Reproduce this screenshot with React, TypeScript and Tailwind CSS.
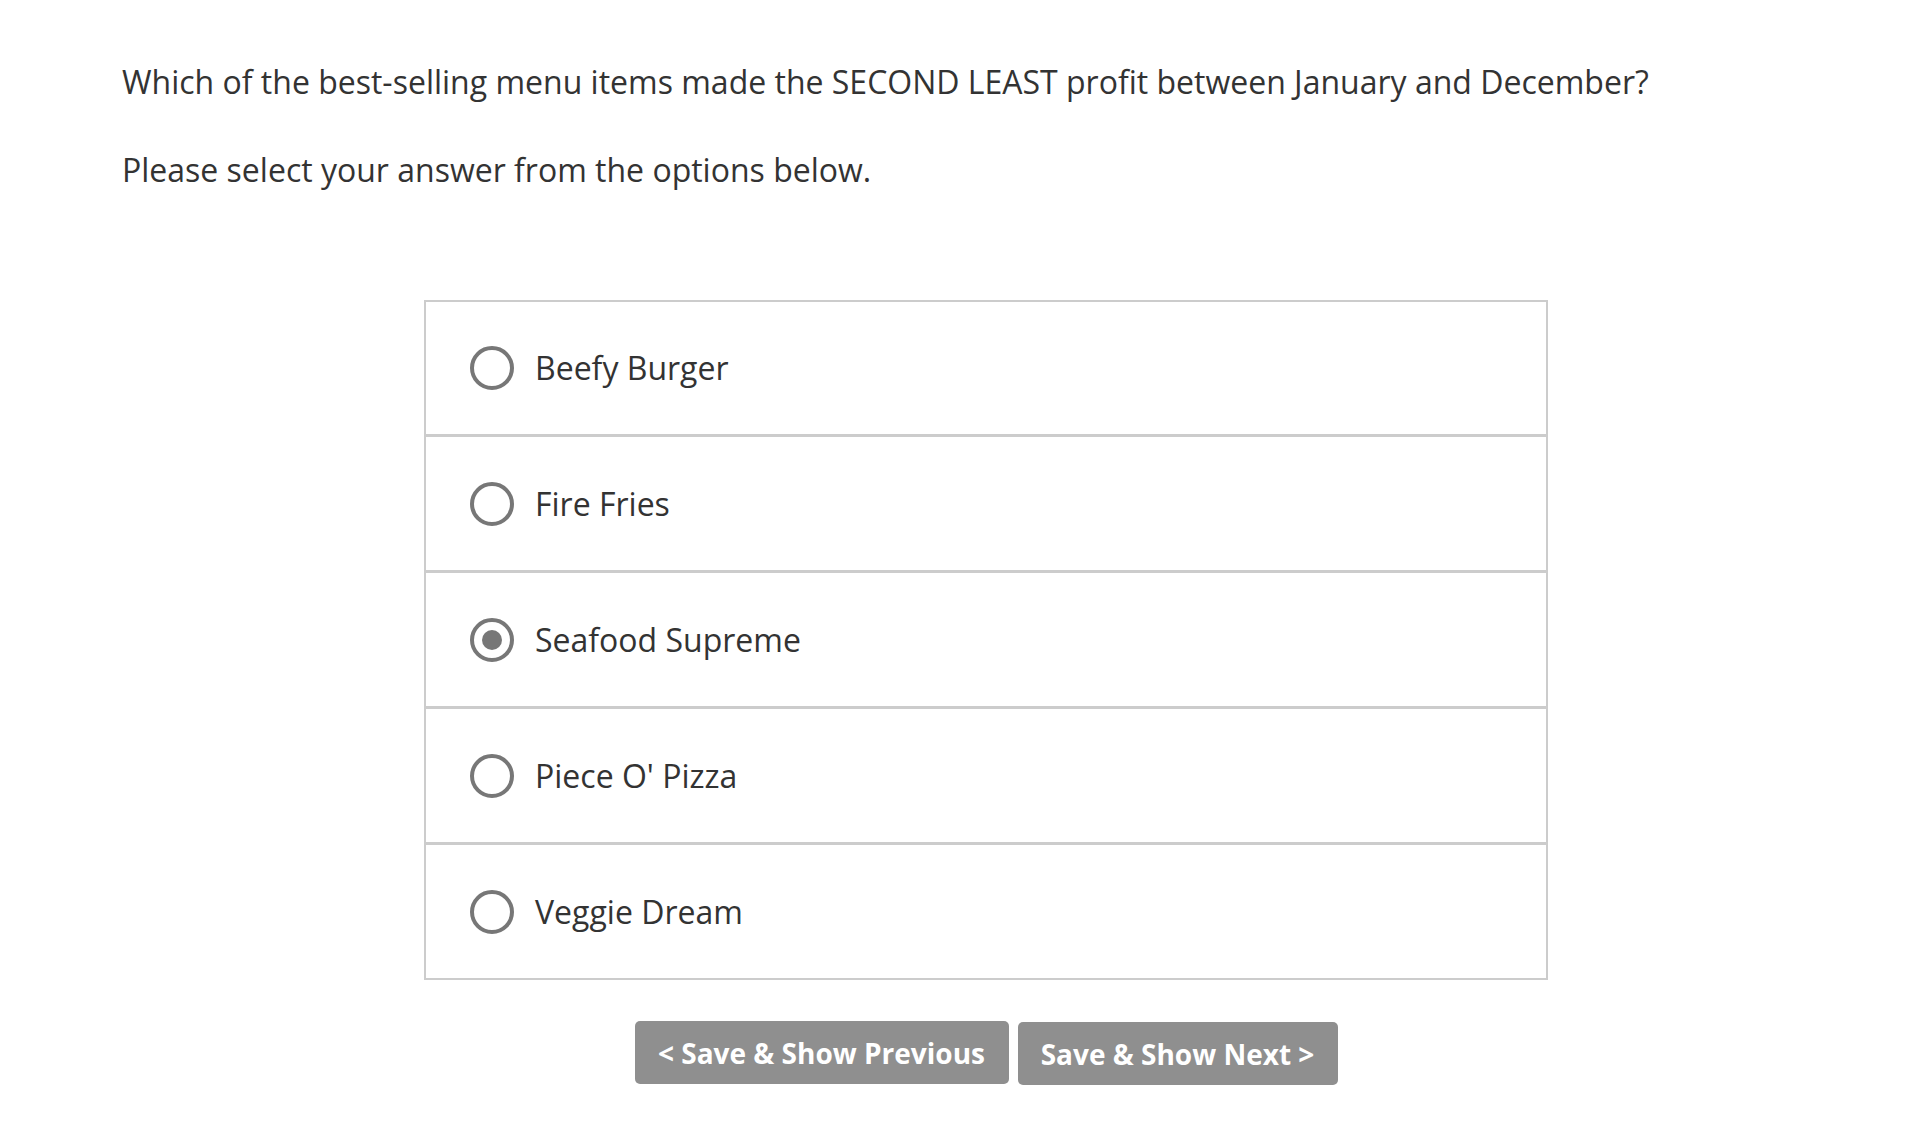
const options = [
  "Beefy Burger",
  "Fire Fries",
  "Seafood Supreme",
  "Piece O' Pizza",
  "Veggie Dream",
];

export default function App() {
  const selected = 2;

  return (
    <div
      className="min-h-[1144px] w-full bg-white pl-[122px] pr-[80px] pt-[62px] text-[#333]"
      style={{ fontFamily: '"Open Sans", "Liberation Sans", sans-serif' }}
    >
      {/* Question */}
      <p className="text-[32px] leading-[40px]">
        Which of the best-selling menu items made the SECOND LEAST profit between January and December?
      </p>
      <p className="mt-[48px] text-[32px] leading-[40px]">
        Please select your answer from the options below.
      </p>

      {/* Options */}
      <div className="mx-auto mt-[110px] w-[1124px] border-2 border-[#ccc]">
        {options.map((opt, i) => (
          <div
            key={i}
            className={`flex items-center pl-[44px] ${i > 0 ? "h-[136px] border-t-[3px] border-[#ccc]" : "h-[132px]"}`}
          >
            <span className="flex h-[44px] w-[44px] items-center justify-center rounded-full border-4 border-[#777]">
              {i === selected && <span className="h-[20px] w-[20px] rounded-full bg-[#777]" />}
            </span>
            <span className="ml-[21px] text-[32px] leading-none">{opt}</span>
          </div>
        ))}
      </div>

      {/* Buttons */}
      <div className="mt-[41px] flex items-start justify-center gap-[9px]">
        <button className="h-[63px] w-[374px] rounded-[5px] bg-[#8f8f8f] text-[28px] font-bold text-white">
          &lt; Save &amp; Show Previous
        </button>
        <button className="mt-[1px] h-[63px] w-[320px] rounded-[5px] bg-[#8f8f8f] text-[28px] font-bold text-white">
          Save &amp; Show Next &gt;
        </button>
      </div>
    </div>
  );
}
